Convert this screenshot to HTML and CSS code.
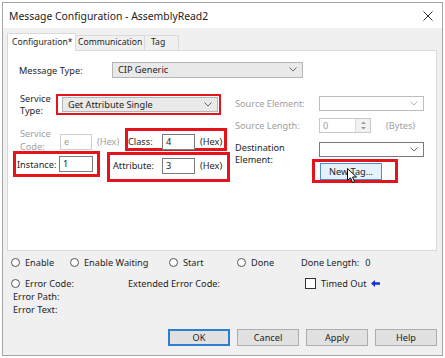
FILE: index.html
```html
<!DOCTYPE html>
<html lang="en">
<head>
    <meta charset="UTF-8">
    <title>Message Configuration - AssemblyRead2</title>
    <link rel="stylesheet" href="styles.css">
</head>
<body>
    <div class="dialog">
        <div class="titlebar">
            <span class="title">Message Configuration - AssemblyRead2</span>
            <svg class="close" width="10" height="10" viewBox="0 0 10 10"><path d="M0.5 0.5 L9.5 9.5 M9.5 0.5 L0.5 9.5" stroke="#333" stroke-width="1"/></svg>
        </div>

        <div class="tabs">
            <div class="tab active">Configuration*</div>
            <div class="tab comm">Communication</div>
            <div class="tab tag">Tag</div>
        </div>

        <div class="panel">
            <div class="row-type">
                <span class="lbl type-lbl">Message Type:</span>
                <div class="combo list type-combo">CIP Generic
                    <svg class="chev" width="8" height="5" viewBox="0 0 8 5"><path d="M0.5 0.5 L4 4 L7.5 0.5" fill="none" stroke="#666"/></svg>
                </div>
            </div>

            <div class="columns">
                <div class="col-left">
                    <div class="row-service">
                        <span class="lbl two svc-lbl">Service<br>Type:</span>
                        <div class="mark svc-box">
                            <div class="combo list svc-combo">Get Attribute Single
                                <svg class="chev" width="8" height="5" viewBox="0 0 8 5"><path d="M0.5 0.5 L4 4 L7.5 0.5" fill="none" stroke="#666"/></svg>
                            </div>
                        </div>
                    </div>

                    <div class="row-code">
                        <span class="lbl off code-lbl">Service<br>Code:</span>
                        <div class="field off code-field">e</div>
                        <span class="hex off code-hex">(Hex)</span>
                        <div class="mark class-box">
                            <span class="lbl class-lbl">Class:</span>
                            <div class="field">4</div>
                            <span class="hex">(Hex)</span>
                        </div>
                    </div>

                    <div class="row-inst">
                        <div class="mark inst-box">
                            <span class="lbl inst-lbl">Instance:</span>
                            <div class="field inst-field">1</div>
                        </div>
                        <div class="mark attr-box">
                            <span class="lbl attr-lbl">Attribute:</span>
                            <div class="field">3</div>
                            <span class="hex">(Hex)</span>
                        </div>
                    </div>
                </div>

                <div class="col-right">
                    <div class="row-src">
                        <span class="lbl off right-lbl">Source Element:</span>
                        <div class="combo off-combo">
                            <svg class="chev" width="8" height="5" viewBox="0 0 8 5"><path d="M0.5 0.5 L4 4 L7.5 0.5" fill="none" stroke="#b5b5b5"/></svg>
                        </div>
                    </div>
                    <div class="row-len">
                        <span class="lbl off right-lbl">Source Length:</span>
                        <div class="spin">
                            <span class="spin-val">0</span>
                            <span class="spin-btns">
                                <svg width="5" height="9" viewBox="0 0 5 9"><path d="M2.5 0.5 L5 3 L0 3 Z M0 6 L5 6 L2.5 8.5 Z" fill="#9a9a9a"/></svg>
                            </span>
                        </div>
                        <span class="off bytes">(Bytes)</span>
                    </div>
                    <div class="row-dest">
                        <span class="lbl two right-lbl dest-lbl">Destination<br>Element:</span>
                        <div class="combo dest-combo">
                            <svg class="chev" width="8" height="5" viewBox="0 0 8 5"><path d="M0.5 0.5 L4 4 L7.5 0.5" fill="none" stroke="#666"/></svg>
                        </div>
                    </div>
                    <div class="mark newtag-box">
                        <div class="btn newtag">New Tag...
                            <svg class="cursor" width="11" height="16" viewBox="0 0 11 16"><path d="M0.5 0.5 L0.5 12.5 L3.5 9.8 L5.6 14.6 L7.6 13.7 L5.6 9 L9.5 9 Z" fill="#fff" stroke="#000" stroke-width="1"/></svg>
                        </div>
                    </div>
                </div>
            </div>
        </div>

        <div class="status">
            <div class="status-row">
                <span class="opt w-enable"><i class="radio"></i>Enable</span>
                <span class="opt w-wait"><i class="radio"></i>Enable Waiting</span>
                <span class="opt w-start"><i class="radio"></i>Start</span>
                <span class="opt w-done"><i class="radio"></i>Done</span>
                <span class="opt">Done Length:<span class="done-val">0</span></span>
            </div>
            <div class="status-row row-err">
                <span class="opt w-err"><i class="radio"></i>Error Code:</span>
                <span class="opt w-ext">Extended Error Code:</span>
                <span class="opt"><i class="check"></i>Timed Out
                    <svg class="arrow" width="9" height="7" viewBox="0 0 9 7"><path d="M0 3.5 L4 0 L4 2.3 L9 2.3 L9 4.7 L4 4.7 L4 7 Z" fill="#1531d6"/></svg>
                </span>
            </div>
            <div class="err-line">Error Path:</div>
            <div class="err-line">Error Text:</div>
        </div>

        <div class="buttons">
            <div class="btn default">OK</div>
            <div class="btn">Cancel</div>
            <div class="btn">Apply</div>
            <div class="btn">Help</div>
        </div>
    </div>
</body>
</html>
```

FILE: styles.css
```css
* {
    box-sizing: border-box;
}
body {
    margin: 0;
    background: #fff;
    font-family: "Noto Sans", "Open Sans", sans-serif;
    font-size: 9.2px;
    color: #1e1e1e;
}
.dialog {
    margin: 2px 0 0 2px;
    width: 441px;
    height: 354px;
    border: 1px solid #a5a5a5;
    background: #f0f0f0;
    display: flex;
    flex-direction: column;
}
.titlebar {
    height: 25px;
    background: #fff;
    display: flex;
    align-items: center;
    justify-content: space-between;
    padding: 0 9px 0 6px;
}
.title {
    font-size: 10.4px;
    color: #222;
}

/* tabs */
.tabs {
    display: flex;
    align-items: flex-end;
    height: 23px;
    padding-left: 4px;
    margin-bottom: -1px;
    font-size: 8.6px;
}
.tab {
    height: 15px;
    line-height: 13px;
    border: 1px solid #d9d9d9;
    border-bottom: none;
    background: #f0f0f0;
    padding-left: 2px;
    margin-bottom: 1px;
    white-space: nowrap;
}
.tab.active {
    width: 69px;
    height: 18px;
    line-height: 17px;
    background: #fff;
    padding-left: 4px;
    margin-bottom: 0;
    position: relative;
    z-index: 1;
}
.tab.comm {
    width: 69px;
    border-left: none;
}
.tab.tag {
    width: 34px;
    border-left: none;
    padding-left: 6px;
}

/* main panel */
.panel {
    margin: 0 5px 0 4px;
    height: 201px;
    background: #fff;
    border: 1px solid #d9d9d9;
}
.lbl {
    white-space: nowrap;
}
.off {
    color: #a0a0a0;
}
.two {
    line-height: 12px;
}
.row-type {
    display: flex;
    align-items: center;
    margin-top: 11px;
    height: 16px;
}
.type-lbl {
    width: 104px;
    padding-left: 11px;
}
.combo {
    position: relative;
    height: 15px;
    line-height: 13px;
    border: 1px solid #7a7a7a;
    background: #fff;
    padding-left: 5px;
}
.combo.list {
    background: #e9e9e9;
    border-color: #b5b5b5;
}
.chev {
    position: absolute;
    right: 5px;
    top: 4px;
}
.type-combo {
    width: 191px;
    height: 16px;
    line-height: 14px;
}

.columns {
    display: flex;
    margin-top: 16px;
}
.col-left {
    width: 227px;
}
.col-right {
    width: 200px;
}

/* red annotation boxes */
.mark {
    border: 3px solid #e3141c;
    display: flex;
    align-items: center;
}

.row-service {
    display: flex;
    height: 21px;
}
.svc-lbl {
    width: 48px;
    padding-left: 12px;
    margin-top: -1px;
}
.svc-box {
    width: 165px;
    height: 21px;
    border-width: 2px;
    padding: 0 1px 0 4px;
}
.svc-combo {
    width: 156px;
}

.field {
    width: 33px;
    height: 16px;
    line-height: 14px;
    border: 1px solid #7a7a7a;
    background: #fff;
    padding-left: 3px;
}
.field.off {
    border-color: #cfcfcf;
}
.hex {
    margin-left: 5px;
}

.row-code {
    display: flex;
    align-items: center;
    margin-top: 13px;
    height: 23px;
}
.code-lbl {
    width: 52px;
    padding-left: 12px;
    line-height: 13px;
}
.code-field {
    width: 32px;
    margin-top: 5px;
}
.code-hex {
    width: 28px;
    margin-top: 4px;
}
.class-box {
    width: 102px;
    height: 23px;
    padding-top: 4px;
}
.class-lbl {
    width: 34px;
}

.row-inst {
    display: flex;
    align-items: flex-start;
}
.inst-box {
    width: 87px;
    height: 26px;
    margin-left: 5px;
}
.inst-lbl {
    width: 43px;
    padding-left: 1px;
}
.inst-field {
    width: 34px;
}
.attr-box {
    width: 123px;
    height: 30px;
    margin-left: 7px;
    margin-top: 1px;
    padding-bottom: 3px;
}
.attr-lbl {
    width: 52px;
    padding-left: 3px;
}

/* right column */
.right-lbl {
    width: 84px;
}
.row-src {
    display: flex;
    align-items: center;
    margin-top: 2px;
    height: 15px;
}
.off-combo {
    width: 105px;
    border-color: #bdbdbd;
}
.row-len {
    display: flex;
    align-items: center;
    margin-top: 7px;
    height: 15px;
}
.spin {
    width: 52px;
    height: 15px;
    border: 1px solid #c8c8c8;
    display: flex;
    background: #fff;
}
.spin-val {
    flex: 1;
    color: #a0a0a0;
    padding-left: 3px;
    line-height: 13px;
}
.spin-btns {
    width: 15px;
    border-left: 1px solid #dcdcdc;
    background: #f2f2f2;
    display: flex;
    align-items: center;
    justify-content: center;
}
.bytes {
    margin-left: 15px;
}
.row-dest {
    display: flex;
    align-items: flex-start;
    margin-top: 9px;
    height: 17px;
}
.dest-combo {
    width: 105px;
}
.newtag-box {
    width: 86px;
    height: 24px;
    margin-left: 77px;
    padding-left: 5px;
}

.btn {
    height: 17px;
    line-height: 15px;
    text-align: center;
    border: 1px solid #adadad;
    background: #e1e1e1;
}
.newtag {
    position: relative;
    width: 62px;
    background: #e5f1fb;
    border-color: #4d8fcf;
}
.cursor {
    position: absolute;
    left: 26px;
    top: 4px;
}

/* status area */
.status {
    padding-left: 8px;
}
.status-row {
    display: flex;
    align-items: center;
    height: 13px;
    margin-top: 5px;
}
.row-err {
    margin-top: 8px;
}
.opt {
    display: flex;
    align-items: center;
    white-space: nowrap;
}
.radio {
    width: 9px;
    height: 9px;
    border: 1px solid #555;
    border-radius: 50%;
    background: #fff;
    margin-right: 5px;
}
.check {
    width: 11px;
    height: 11px;
    border: 1px solid #333;
    background: #fff;
    margin-right: 5px;
}
.w-enable {
    width: 59px;
}
.w-wait {
    width: 99px;
}
.w-start {
    width: 68px;
}
.w-done {
    width: 64px;
}
.done-val {
    margin-left: 6px;
}
.w-err {
    width: 117px;
}
.w-ext {
    width: 177px;
}
.arrow {
    margin-left: 5px;
}
.err-line {
    height: 13px;
    line-height: 13px;
    padding-left: 2px;
}
.err-line:first-of-type {
    margin-top: 3px;
}

.buttons {
    display: flex;
    justify-content: flex-end;
    gap: 7px;
    padding-right: 5px;
    margin-top: 13px;
}
.buttons .btn {
    width: 62px;
}
.btn.default {
    border: 2px solid #2a7fd0;
    line-height: 13px;
}
```
